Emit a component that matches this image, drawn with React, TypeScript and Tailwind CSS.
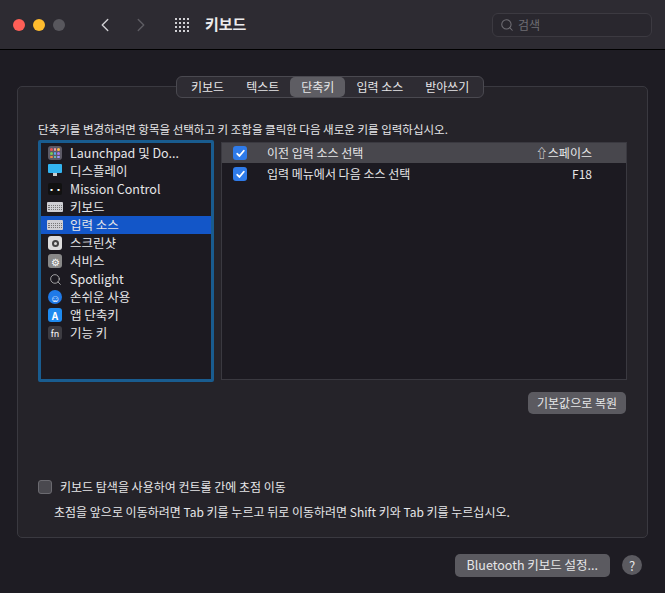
import { ChevronLeft, ChevronRight, Search } from "lucide-react"

const F = { fontFamily: '"Noto Sans CJK KR", "Noto Sans", sans-serif' }

function Check({ on = true }: { on?: boolean }) {
  return on ? (
    <span className="flex h-[14px] w-[14px] items-center justify-center rounded-[3px] bg-[#2f7be9]">
      <svg viewBox="0 0 12 12" className="h-[11px] w-[11px]">
        <path d="M2.5 6.3l2.3 2.4L9.6 3" fill="none" stroke="white" strokeWidth="2" strokeLinecap="round" strokeLinejoin="round" />
      </svg>
    </span>
  ) : (
    <span className="h-[14px] w-[14px] rounded-[3px] border border-[#6b6a70] bg-[#4a494f]" />
  )
}

const Kb = () => (
  <span className="flex h-[10px] w-[16px] flex-col justify-center gap-[1px] rounded-[1px] bg-[#cfcfd4] px-[1px]">
    <span className="h-[1px] border-t border-dotted border-[#777]" />
    <span className="h-[1px] border-t border-dotted border-[#777]" />
    <span className="h-[1px] border-t border-dotted border-[#777]" />
  </span>
)

const items: { label: string; icon: React.ReactNode; sel?: boolean }[] = [
  { label: "Launchpad 및 Do...", icon: <span className="grid h-[14px] w-[14px] grid-cols-3 gap-[1px] rounded-[3px] bg-[#5c5a66] p-[2px]">{["#e55","#e9a","#fb4","#7c5","#5ae","#a7e","#e84","#6dc","#99f"].map((c,i)=><span key={i} style={{background:c}} className="rounded-full" />)}</span> },
  { label: "디스플레이", icon: <span className="flex h-[14px] w-[14px] flex-col items-center"><span className="h-[9px] w-[14px] rounded-[1px] bg-[#33b4f0]" /><span className="h-[3px] w-[4px] bg-[#ccc]" /></span> },
  { label: "Mission Control", icon: <span className="flex h-[12px] w-[14px] items-center justify-center gap-[1px] rounded-[2px] bg-[#111] text-[7px] text-white">▪▪</span> },
  { label: "키보드", icon: <Kb /> },
  { label: "입력 소스", icon: <Kb />, sel: true },
  { label: "스크린샷", icon: <span className="flex h-[14px] w-[14px] items-center justify-center rounded-[3px] bg-[#ddd]"><span className="h-[7px] w-[7px] rounded-full border-2 border-[#444]" /></span> },
  { label: "서비스", icon: <span className="flex h-[14px] w-[14px] items-center justify-center rounded-[3px] bg-[#888] text-[10px] text-white">⚙</span> },
  { label: "Spotlight", icon: <Search size={13} strokeWidth={1.5} className="text-[#bbb]" /> },
  { label: "손쉬운 사용", icon: <span className="flex h-[14px] w-[14px] items-center justify-center rounded-full bg-[#1f7ae8] text-[10px] text-white">☺</span> },
  { label: "앱 단축키", icon: <span className="flex h-[14px] w-[14px] items-center justify-center rounded-[3px] bg-[#1e8bf0] text-[10px] font-bold text-white">A</span> },
  { label: "기능 키", icon: <span className="flex h-[14px] w-[14px] items-center justify-center rounded-[3px] bg-[#3d3c42] text-[9px] text-white">fn</span> },
]

export default function App() {
  return (
    <div style={F} className="flex h-[593px] w-[665px] flex-col overflow-hidden bg-[#1e1c23] text-[12px] text-[#e6e6e8]">
      <div className="flex h-[50px] shrink-0 items-center border-b border-black bg-[#2d2b32] px-[13px]">
        <span className="h-[12px] w-[12px] rounded-full bg-[#fe5f57]" />
        <span className="ml-[8px] h-[12px] w-[12px] rounded-full bg-[#febc2e]" />
        <span className="ml-[8px] h-[12px] w-[12px] rounded-full bg-[#58575d]" />
        <ChevronLeft size={22} strokeWidth={1.5} className="ml-[29px] text-[#d0d0d4]" />
        <ChevronRight size={22} strokeWidth={1.5} className="ml-[14px] text-[#5e5d63]" />
        <span className="ml-[23px] grid grid-cols-4 gap-[2px]">{Array.from({length:16}).map((_,i)=><span key={i} className="h-[2px] w-[2px] bg-[#d0d0d4]" />)}</span>
        <span className="ml-[16px] text-[15px] font-bold text-[#ececee]">키보드</span>
        <div className="ml-auto flex h-[24px] w-[160px] items-center gap-[4px] rounded-[6px] border border-[#3c3a41] bg-[#29272e] px-[7px] text-[12px] text-[#6f6e74]">
          <Search size={14} strokeWidth={1.8} />검색
        </div>
      </div>

      <div className="relative mx-[17px] mt-[36px] flex h-[452px] flex-col rounded-[5px] border border-[#3a3940] bg-[#252329] px-[20px] pt-[34px]">
        <div className="absolute -top-[11px] left-[158px] flex h-[22px] items-center rounded-[6px] border border-[#4a4950] bg-[#2e2c33] px-[3px] text-[12px]">
          {["키보드","텍스트","단축키","입력 소스","받아쓰기"].map(t=>(
            <span key={t} className={`rounded-[5px] px-[11px] py-[1px] ${t==="단축키"?"bg-[#5e5d63]":""}`}>{t}</span>
          ))}
        </div>
        <div className="text-[11.5px]">단축키를 변경하려면 항목을 선택하고 키 조합을 클릭한 다음 새로운 키를 입력하십시오.</div>
        <div className="mt-[2px] flex gap-[7px]">
          <div className="h-[242px] w-[176px] rounded-[2px] border-[3px] border-[#195c8f] bg-[#1c1a21] pt-[1px]">
            {items.map(it=>(
              <div key={it.label} className={`flex h-[18px] items-center gap-[7px] px-[6px] text-[12.5px] ${it.sel?"bg-[#1356c8]":""}`}>
                <span className="flex w-[16px] justify-center">{it.icon}</span>{it.label}
              </div>
            ))}
          </div>
          <div className="mt-[2px] h-[238px] flex-1 border border-[#3a3940] bg-[#1c1a21]">
            <div className="flex h-[20px] items-center bg-[#48474d] pl-[11px] pr-[34px]">
              <Check /><span className="ml-[20px]">이전 입력 소스 선택</span><span className="ml-auto">⇧스페이스</span>
            </div>
            <div className="flex h-[22px] items-center pl-[11px] pr-[34px]">
              <Check /><span className="ml-[20px]">입력 메뉴에서 다음 소스 선택</span><span className="ml-auto">F18</span>
            </div>
          </div>
        </div>
        <div className="mt-[10px] flex justify-end pr-[1px]">
          <span className="rounded-[5px] bg-[#5b5a60] px-[9px] py-[2px] text-[12px]">기본값으로 복원</span>
        </div>
        <div className="mt-[64px] flex items-center gap-[8px] text-[12px]">
          <Check on={false} />키보드 탐색을 사용하여 컨트롤 간에 초점 이동
        </div>
        <div className="ml-[16px] mt-[7px] text-[12px]">초점을 앞으로 이동하려면 Tab 키를 누르고 뒤로 이동하려면 Shift 키와 Tab 키를 누르십시오.</div>
      </div>

      <div className="mt-[16px] flex items-center justify-end gap-[12px] pr-[23px]">
        <span className="rounded-[5px] bg-[#5b5a60] px-[12px] py-[2px] text-[12.5px]">Bluetooth 키보드 설정...</span>
        <span className="flex h-[20px] w-[20px] items-center justify-center rounded-full bg-[#5b5a60] text-[13px]">?</span>
      </div>
    </div>
  )
}
